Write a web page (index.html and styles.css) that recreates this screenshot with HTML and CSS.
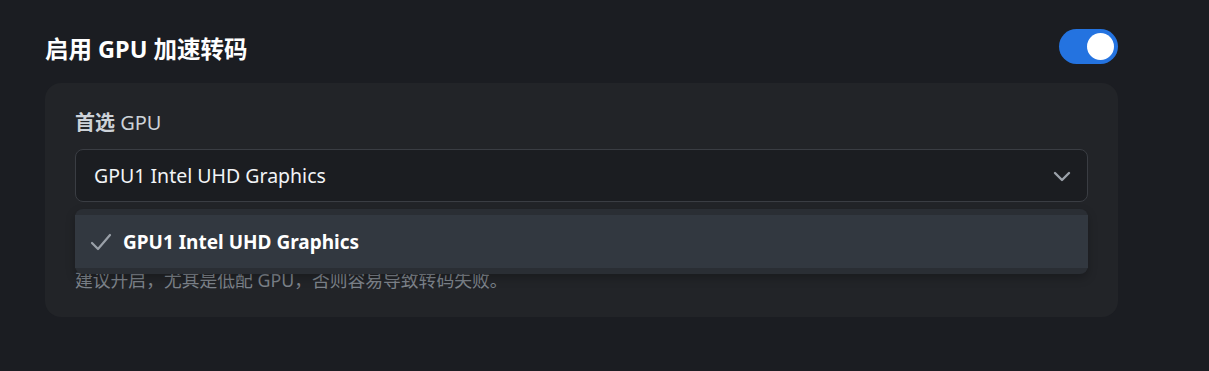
FILE: index.html
```html
<!DOCTYPE html>
<html lang="zh-CN">

<head>
  <meta charset="UTF-8">
  <meta name="viewport" content="width=device-width, initial-scale=1.0">
  <title>GPU 加速转码</title>
  <link rel="stylesheet" href="styles.css">
</head>

<body>
  <div class="setting">
    <div class="head">
      <h2 class="title">启用 GPU 加速转码</h2>
      <div class="switch on"><span class="knob"></span></div>
    </div>

    <div class="panel">
      <div class="label"><b>首选</b> GPU</div>
      <div class="select">
        <span>GPU1 Intel UHD Graphics</span>
        <svg class="arrow" width="18" height="12" viewBox="0 0 18 12">
          <path d="M2 3l7 7 7-7" fill="none" stroke="#9ba1a9" stroke-width="2.4" stroke-linecap="round" stroke-linejoin="round" />
        </svg>
      </div>
      <ul class="menu">
        <li class="item selected">
          <svg class="check" width="22" height="20" viewBox="0 0 22 20">
            <path d="M2 11l6 6L20 3" fill="none" stroke="#9aa0a8" stroke-width="2.2" stroke-linecap="round" stroke-linejoin="round" />
          </svg>
          GPU1 Intel UHD Graphics
        </li>
      </ul>
      <p class="hint">建议开启，尤其是低配 GPU，否则容易导致转码失败。</p>
    </div>
  </div>
</body>

</html>
```

FILE: styles.css
```css
* {
  margin: 0;
  padding: 0;
  box-sizing: border-box;
}

body {
  background-color: #1b1d22;
  font-family: "Noto Sans", "Noto Sans CJK SC", sans-serif;
  color: #fff;
}

li {
  list-style: none;
}

.setting {
  width: 1073px;
  margin-left: 45px;
  padding-top: 29px;
}

.head {
  display: flex;
  align-items: center;
  justify-content: space-between;
  height: 35px;
}

.title {
  font-size: 23.5px;
  font-weight: bold;
  color: #fff;
  margin-top: 2px;
}

.switch {
  width: 59px;
  height: 35px;
  border-radius: 18px;
  background-color: #2473e0;
  display: flex;
  align-items: center;
  padding: 0 4px;
}

.switch.on {
  justify-content: flex-end;
}

.switch .knob {
  width: 27px;
  height: 27px;
  border-radius: 50%;
  background-color: #fff;
}

.panel {
  position: relative;
  margin-top: 19px;
  background-color: #222428;
  border-radius: 16px;
  padding: 26px 30px 24px;
}

.label {
  font-size: 20px;
  line-height: 28px;
  color: #cdd2d8;
}

.label b {
  font-weight: bold;
}

.select {
  margin-top: 12px;
  height: 53px;
  border: 1px solid #3a3d43;
  border-radius: 8px;
  background-color: #1b1d21;
  display: flex;
  align-items: center;
  justify-content: space-between;
  padding: 0 16px 0 18px;
  font-size: 19.5px;
  color: #f2f4f6;
}

.arrow {
  display: block;
}

.menu {
  position: absolute;
  left: 30px;
  right: 30px;
  top: 126px;
  background-color: #2a2e34;
  border-radius: 8px;
  padding: 6px 0;
  box-shadow: 0 4px 10px rgba(0, 0, 0, 0.25);
}

.menu .item {
  height: 53px;
  display: flex;
  align-items: center;
  gap: 11px;
  padding-left: 15px;
  font-size: 19px;
  font-weight: bold;
  color: #fff;
}

.menu .selected {
  background-color: #323840;
}

.hint {
  margin-top: 65px;
  font-size: 17.8px;
  line-height: 26px;
  color: #7d838b;
}
```
